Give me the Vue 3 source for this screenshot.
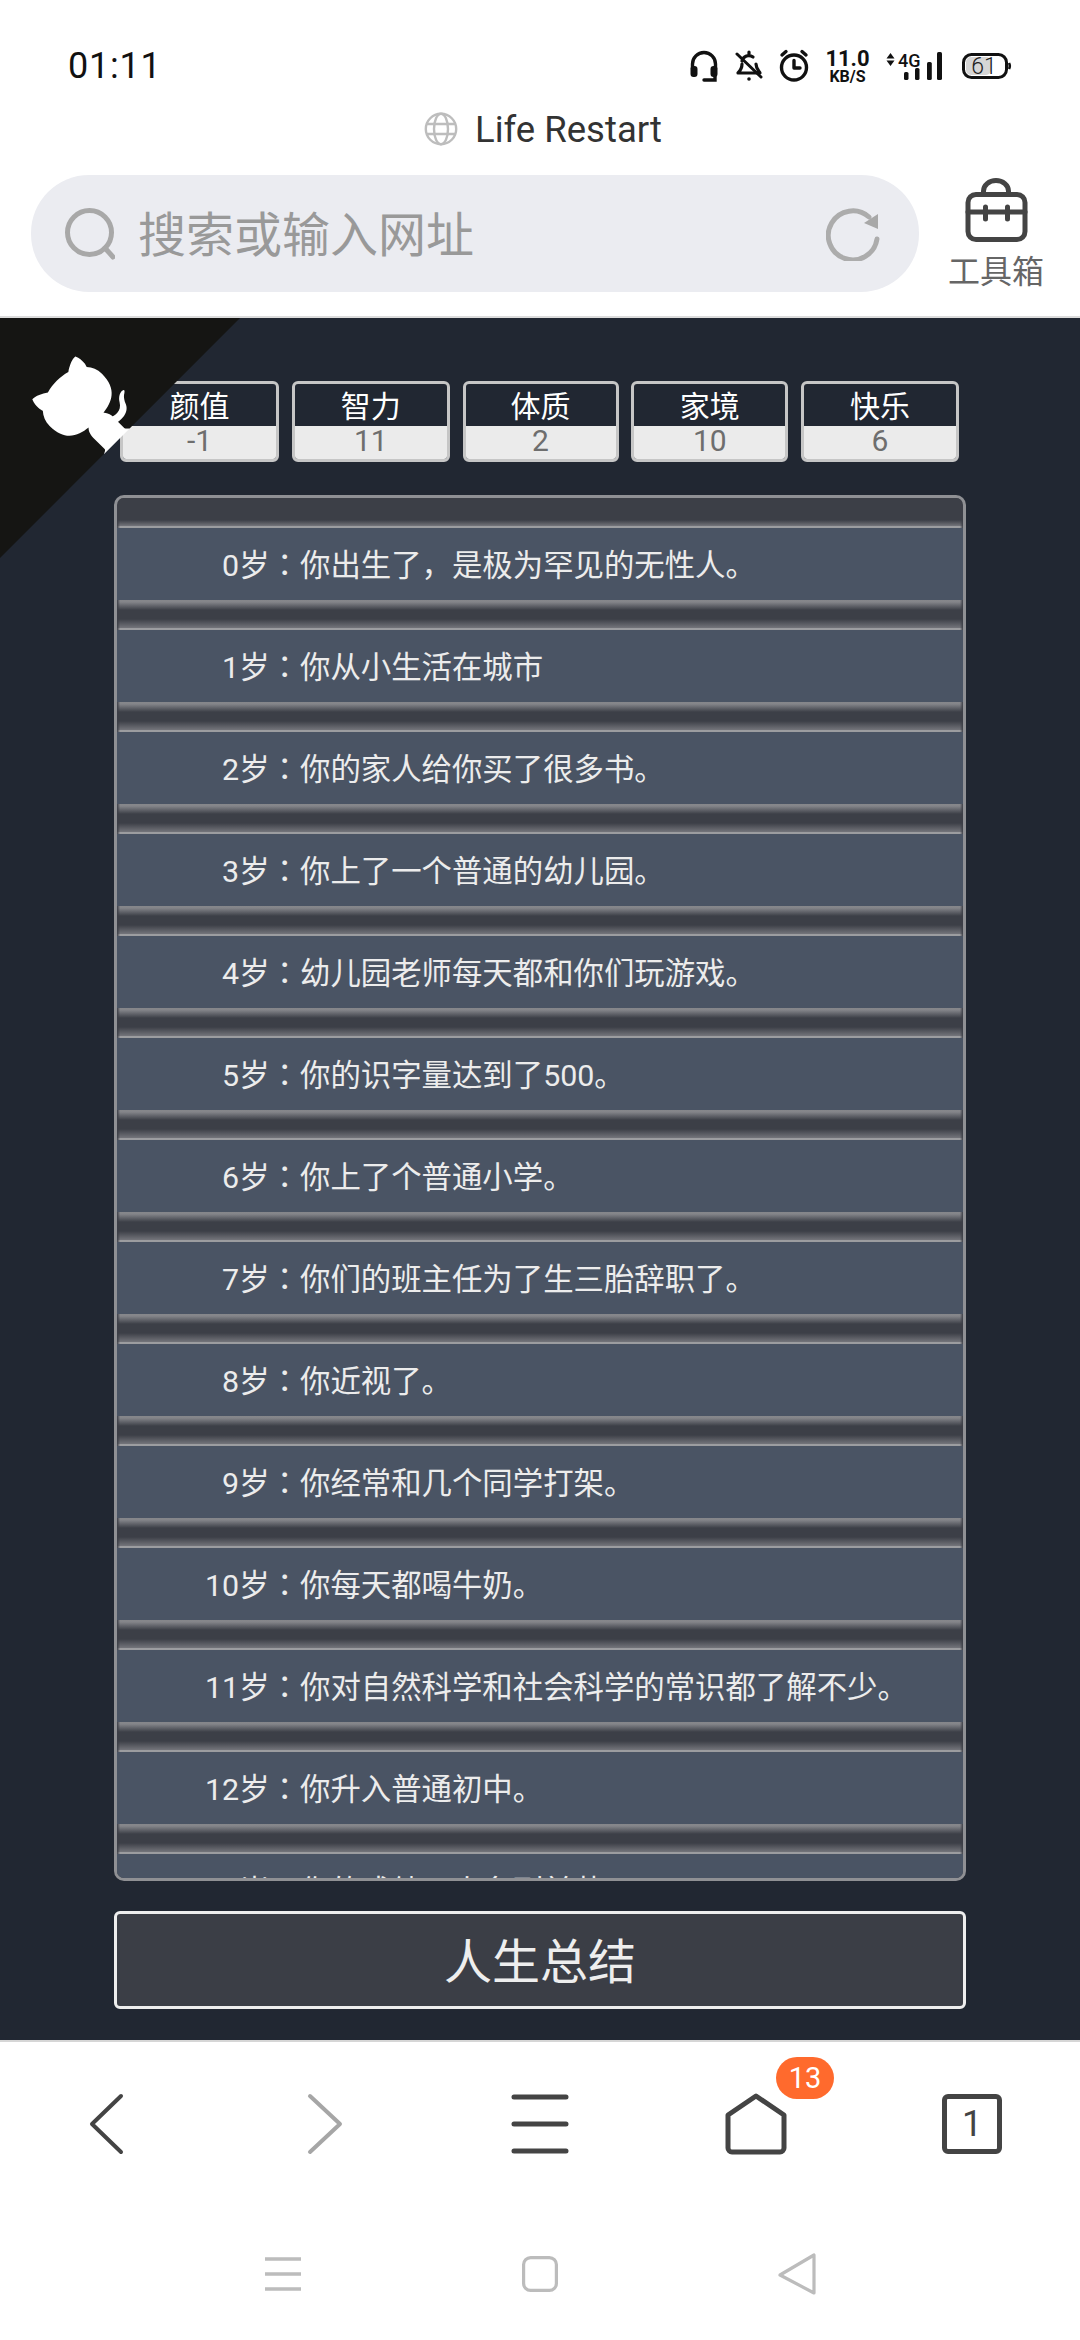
<script setup>
const stats = [
  { name: '颜值', value: '-1' },
  { name: '智力', value: '11' },
  { name: '体质', value: '2' },
  { name: '家境', value: '10' },
  { name: '快乐', value: '6' }
]
const rows = [
  '你出生了，是极为罕见的无性人。',
  '你从小生活在城市',
  '你的家人给你买了很多书。',
  '你上了一个普通的幼儿园。',
  '幼儿园老师每天都和你们玩游戏。',
  '你的识字量达到了500。',
  '你上了个普通小学。',
  '你们的班主任为了生三胎辞职了。',
  '你近视了。',
  '你经常和几个同学打架。',
  '你每天都喝牛奶。',
  '你对自然科学和社会科学的常识都了解不少。',
  '你升入普通初中。',
  '你的成绩一直名列前茅。'
]
</script>

<template>
  <div class="page">
    <header class="top">
      <div class="status">
        <span class="time">01:11</span>
        <div class="status-icons">
          <svg width="30" height="34" viewBox="0 0 30 34" fill="none" stroke="#111" stroke-width="3.4" stroke-linecap="round">
            <path d="M3.5 20V15a11.5 11.5 0 0 1 23 0V20" />
            <rect x="2.5" y="18" width="5" height="9" rx="2" fill="#111" stroke-width="2" />
            <rect x="22.5" y="18" width="5" height="9" rx="2" fill="#111" stroke-width="2" />
            <path d="M15 31H26V27" />
          </svg>
          <svg width="28" height="34" viewBox="0 0 28 34" fill="none" stroke="#111" stroke-width="3.2" stroke-linecap="round" stroke-linejoin="round">
            <path d="M14 3v2M7 12a7 7 0 0 1 11-4M21 15c0 4 2 6 4 9H3c2-2 4-5 4-9" />
            <path d="M2 5L26 28" stroke-width="3" />
            <circle cx="14" cy="30" r="1.8" fill="#111" stroke="none" />
          </svg>
          <svg width="30" height="34" viewBox="0 0 30 34" fill="none" stroke="#111" stroke-width="3.4" stroke-linecap="round" stroke-linejoin="round">
            <circle cx="15" cy="18.5" r="12.5" />
            <path d="M15 11.5V19H21" />
            <path d="M3 6L7 2.5M27 6L23 2.5" />
          </svg>
          <div class="speed"><span class="speed-num">11.0</span><span class="speed-unit">KB/S</span></div>
          <svg width="56" height="34" viewBox="0 0 56 34" fill="#111">
            <path d="M4.5 4L8.5 9.5H.5ZM4.5 17L.5 11.5H8.5Z" />
            <text x="12" y="18" class="net-label">4G</text>
            <rect x="18" y="23" width="4.5" height="8" rx="1.6" />
            <rect x="29" y="19" width="4.5" height="12" rx="1.6" />
            <rect x="41" y="13" width="4.8" height="18" rx="1.6" />
            <rect x="51" y="3" width="5" height="28" rx="1.6" />
          </svg>
          <svg width="54" height="34" viewBox="0 0 54 34" fill="none">
            <rect x="5.5" y="5.5" width="43" height="23" rx="8" stroke="#111" stroke-width="3" />
            <rect x="8" y="8" width="25" height="18" rx="5" fill="#d6d6d6" />
            <path d="M51 14q1.6 3 0 6" stroke="#111" stroke-width="2.6" />
            <text x="26" y="25" text-anchor="middle" class="bat-label">61</text>
          </svg>
        </div>
      </div>
      <div class="title">
        <svg width="34" height="34" viewBox="0 0 34 34" fill="none" stroke="#bdbdbd" stroke-width="2.4">
          <circle cx="17" cy="17" r="15.2" />
          <ellipse cx="17" cy="17" rx="7" ry="15.2" />
          <path d="M2 12H32M2 22H32" />
        </svg>
        <span>Life Restart</span>
      </div>
      <div class="toolbar">
        <div class="search">
          <svg width="50" height="52" viewBox="0 0 50 52" fill="none" stroke="#a8a8a8" stroke-width="5" stroke-linecap="round">
            <circle cx="24.5" cy="24.5" r="22" />
            <path d="M40 40L48 49" />
          </svg>
          <span class="placeholder">搜索或输入网址</span>
          <svg class="reload" width="54" height="54" viewBox="0 0 54 54" fill="none">
            <path d="M43 10A24.5 24.5 0 1 0 51 32" stroke="#acacac" stroke-width="5" stroke-linecap="round" />
            <path d="M38 16L52 7V22Z" fill="#a8a8a8" />
          </svg>
        </div>
        <div class="tool">
          <svg width="66" height="66" viewBox="0 0 66 66" fill="none" stroke="#444" stroke-width="5" stroke-linecap="round" stroke-linejoin="round">
            <path d="M20.5 16V13a12.5 10.5 0 0 1 25 0V16" />
            <rect x="5" y="16.5" width="57" height="45" rx="8" />
            <path d="M5 34H62M22.5 29V41M44.5 29V41" />
          </svg>
          <span>工具箱</span>
        </div>
      </div>
    </header>

    <main class="game">
      <a class="corner" aria-label="GitHub">
        <svg width="240" height="240" viewBox="0 0 250 250">
          <path fill="#151513" d="M0,0 L115,115 L130,115 L142,142 L250,250 L250,0 Z" />
          <path fill="#fff" d="M128.3,109.0 C113.8,99.7 119.0,89.6 119.0,89.6 C122.0,82.7 120.5,78.6 120.5,78.6 C119.2,72.0 123.4,76.3 123.4,76.3 C127.3,80.9 125.5,87.3 125.5,87.3 C122.9,97.6 130.6,101.9 134.4,103.2" />
          <path fill="#fff" d="M115.0,115.0 C114.9,115.1 118.7,116.5 119.8,115.4 L133.7,101.6 C136.9,99.2 139.9,98.4 142.2,98.6 C133.8,88.0 127.5,74.4 143.8,58.0 C148.5,53.4 154.0,51.2 159.7,51.0 C160.3,49.4 163.2,43.6 171.4,40.1 C171.4,40.1 176.1,42.5 178.8,56.2 C183.1,58.6 187.2,61.8 190.9,65.4 C194.5,69.0 197.7,73.2 200.1,77.6 C213.8,80.2 216.3,84.9 216.3,84.9 C212.7,93.1 206.9,96.0 205.4,96.6 C205.1,102.4 203.0,107.8 198.3,112.5 C181.9,128.9 168.3,122.5 157.7,114.1 C157.9,116.9 156.7,120.9 152.7,124.9 L141.0,136.5 C139.8,137.7 141.6,141.9 141.8,141.8 Z" />
        </svg>
      </a>
      <div class="stats">
        <div v-for="s in stats" :key="s.name" class="stat">
          <div class="stat-name">{{ s.name }}</div>
          <div class="stat-value">{{ s.value }}</div>
        </div>
      </div>
      <ul class="list">
        <li v-for="(text, age) in rows" :key="age" class="row">
          <span class="age">{{ age }}岁<span class="colon">：</span></span>
          <span class="event">{{ text }}</span>
        </li>
      </ul>
      <button class="summary">人生总结</button>
    </main>

    <footer class="bottom">
      <nav class="browser-nav">
        <svg width="60" height="64" viewBox="0 0 60 64" fill="none" stroke="#444" stroke-width="4" stroke-linecap="round" stroke-linejoin="round">
          <path d="M43 4L14 32L43 60" />
        </svg>
        <svg width="60" height="64" viewBox="0 0 60 64" fill="none" stroke="#a6a6a6" stroke-width="4" stroke-linecap="round" stroke-linejoin="round">
          <path d="M16 4L46 32L16 60" />
        </svg>
        <svg width="60" height="64" viewBox="0 0 60 64" fill="none" stroke="#444" stroke-width="5" stroke-linecap="round">
          <path d="M4 5H56M4 32H56M4 59H56" />
        </svg>
        <div class="home">
          <svg width="64" height="64" viewBox="0 0 64 64" fill="none" stroke="#444" stroke-width="5" stroke-linecap="round" stroke-linejoin="round">
            <path d="M32 4L60 23V56a4 4 0 0 1-4 4H8a4 4 0 0 1-4-4V23Z" />
          </svg>
          <span class="badge">13</span>
        </div>
        <div class="tabs">1</div>
      </nav>
      <nav class="system-nav">
        <svg width="40" height="40" viewBox="0 0 40 40" fill="none" stroke="#bcbcbc" stroke-width="3.4">
          <path d="M2 5H38M2 20H38M2 35H38" />
        </svg>
        <svg width="40" height="40" viewBox="0 0 40 40" fill="none" stroke="#bcbcbc" stroke-width="3.2">
          <rect x="3.6" y="3.6" width="32.8" height="32.8" rx="7" />
        </svg>
        <svg width="40" height="44" viewBox="0 0 40 44" fill="none" stroke="#bcbcbc" stroke-width="3.2" stroke-linejoin="round">
          <path d="M37 3V41L3 23Z" />
        </svg>
      </nav>
    </footer>
  </div>
</template>

<style>
html, body { margin: 0; background: #fff; }
</style>

<style scoped>
* { box-sizing: border-box; }
.page {
  width: 1080px;
  height: 2340px;
  display: flex;
  flex-direction: column;
  overflow: hidden;
  background: #fff;
  font-family: Roboto, "Noto Sans CJK SC", sans-serif;
}
.top {
  height: 318px;
  flex: none;
  border-bottom: 2px solid #dcdcdc;
}
.status {
  height: 98px;
  padding: 34px 68px 0;
  display: flex;
  align-items: center;
}
.time {
  font-size: 36px;
  color: #111;
  letter-spacing: 0.8px;
}
.status-icons {
  margin-left: auto;
  display: flex;
  align-items: center;
  gap: 16px;
}
.speed {
  width: 45px;
  display: flex;
  flex-direction: column;
  align-items: center;
  color: #111;
  font-weight: 700;
}
.speed-num { font-size: 22px; line-height: 21px; white-space: nowrap; }
.speed-unit { font-size: 16px; line-height: 15px; white-space: nowrap; }
.net-label { font: 500 18px Roboto, sans-serif; }
.bat-label { font: 300 23px Roboto, sans-serif; fill: #222; }
.title {
  height: 62px;
  display: flex;
  align-items: center;
  justify-content: center;
  gap: 17px;
  padding-left: 6px;
  font-size: 36.5px;
  color: #333;
}
.toolbar {
  display: flex;
  align-items: flex-start;
  padding: 15px 0 0 31px;
}
.search {
  width: 888px;
  height: 117px;
  flex: none;
  border-radius: 58px;
  background: #ebecf1;
  display: flex;
  align-items: center;
  padding: 0 39px 0 34px;
  gap: 23px;
}
.placeholder {
  font-size: 48px;
  color: #999;
  line-height: 1;
  padding-top: 5px;
}
.reload { margin-left: auto; }
.tool {
  width: 96px;
  margin-left: 29px;
  padding-top: 3px;
  display: flex;
  flex-direction: column;
  align-items: center;
  gap: 12px;
  color: #666;
  font-size: 32px;
  line-height: 32px;
  white-space: nowrap;
}
.game {
  position: relative;
  height: 1722px;
  flex: none;
  background: #212732;
  padding: 63px 114px 0;
}
.corner {
  position: absolute;
  top: 0;
  left: 0;
  width: 240px;
  height: 240px;
  transform: scaleX(-1);
  z-index: 2;
}
.corner svg { display: block; }
.stats {
  display: grid;
  grid-template-columns: 159px 158px 156px 157px 158px;
  column-gap: 12.75px;
  margin-left: 6px;
}
.stat {
  height: 81px;
  border: 3px solid #c6c6c6;
  border-radius: 6px;
  overflow: hidden;
  text-align: center;
  display: flex;
  flex-direction: column;
}
.stat-name {
  height: 42px;
  flex: none;
  color: #fff;
  font-size: 30px;
  line-height: 46px;
}
.stat-value {
  flex: 1;
  background: #ebebeb;
  color: #6e6e6e;
  font-size: 30px;
  line-height: 30px;
}
.list {
  list-style: none;
  margin: 33px 0 0;
  padding: 0;
  height: 1386px;
  border: 3px solid #8f9094;
  border-radius: 10px;
  overflow: hidden;
  background: #3c3f47;
}
.row {
  position: relative;
  height: 102px;
  padding: 30px 0 3px;
  display: flex;
  align-items: center;
  color: #ececec;
  font-size: 30.4px;
  background: linear-gradient(to bottom, transparent 30px, #4a5464 30px);
}
.row::before {
  content: "";
  position: absolute;
  left: 0;
  right: 0;
  top: 0;
  height: 30px;
  background: linear-gradient(to bottom,
    #86878b 0, #84858a 2px, #3c3f47 10px, #3c3f47 19px,
    #74757b 28px, #9c9da0 28px, #9c9da0 30px);
  -webkit-mask-image: linear-gradient(to right, transparent 0, #000 3px, #000 calc(100% - 3px), transparent 100%);
  mask-image: linear-gradient(to right, transparent 0, #000 3px, #000 calc(100% - 3px), transparent 100%);
}
.row:first-child::before {
  background: linear-gradient(to bottom,
    #3c3f47 0, #3c3f47 22px, #74757b 28px, #9c9da0 28px, #9c9da0 30px);
}
.age {
  width: 183px;
  flex: none;
  text-align: right;
  white-space: nowrap;
}
.colon { font-family: "Noto Sans CJK TC", sans-serif; }
.event { white-space: nowrap; }
.summary {
  display: block;
  width: 100%;
  height: 98px;
  margin-top: 30px;
  border: 3px solid #eee;
  border-radius: 6px;
  background: #3b3e46;
  color: #eee;
  font: 400 48px Roboto, "Noto Sans CJK SC", sans-serif;
  padding: 0 0 5px;
}
.bottom {
  flex: 1;
  border-top: 2px solid #d6d6d6;
  background: #fff;
}
.browser-nav {
  display: grid;
  grid-template-columns: repeat(5, 216px);
  justify-items: center;
  padding-top: 50px;
  height: 200px;
}
.home { position: relative; width: 64px; height: 64px; }
.home svg { display: block; }
.badge {
  position: absolute;
  left: 52px;
  top: -35px;
  width: 58px;
  height: 42px;
  border-radius: 21px;
  background: #ff6a2d;
  color: #fff;
  font-size: 29px;
  line-height: 42px;
  text-align: center;
}
.tabs {
  width: 60px;
  height: 60px;
  margin-top: 2px;
  border: 5px solid #444;
  border-radius: 6px;
  color: #444;
  font-size: 36px;
  font-weight: 400;
  line-height: 50px;
  text-align: center;
}
.system-nav {
  display: flex;
  justify-content: center;
  align-items: center;
  gap: 217px;
  padding-top: 10px;
}
</style>
